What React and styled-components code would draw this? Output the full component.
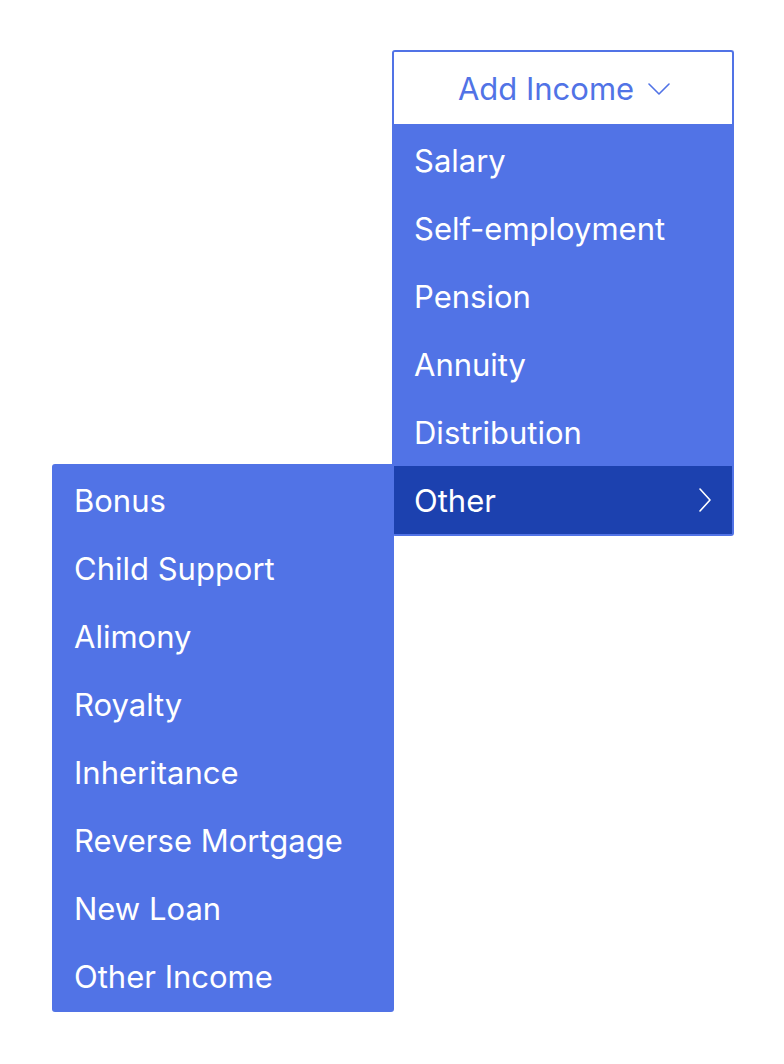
import React from "react";
import styled, { createGlobalStyle } from "styled-components";

const GlobalStyle = createGlobalStyle`
  body {
    margin: 0;
    background: #ffffff;
    font-family: Inter, "Noto Sans", sans-serif;
  }
`;

const mainItems = ["Salary", "Self-employment", "Pension", "Annuity", "Distribution"];
const otherItems = [
  "Bonus",
  "Child Support",
  "Alimony",
  "Royalty",
  "Inheritance",
  "Reverse Mortgage",
  "New Loan",
  "Other Income",
];

const ChevronDown = () => (
  <svg width="22" height="12" viewBox="0 0 22 12" fill="none">
    <path d="M1 1l10 10L21 1" stroke="currentColor" strokeWidth="1.6" strokeLinecap="round" strokeLinejoin="round" />
  </svg>
);

const ChevronRight = () => (
  <svg width="12" height="24" viewBox="0 0 12 24" fill="none">
    <path d="M1 1l10 11L1 23" stroke="currentColor" strokeWidth="1.6" strokeLinecap="round" strokeLinejoin="round" />
  </svg>
);

const App = () => {
  return (
    <>
      <GlobalStyle />
      <Page>
        <Dropdown>
          <Toggle>
            Add Income
            <ChevronDown />
          </Toggle>
          <Menu>
            {mainItems.map((item) => (
              <Item key={item}>{item}</Item>
            ))}
            <Item $active>
              Other
              <ChevronRight />
              <SubMenu>
                {otherItems.map((item) => (
                  <Item key={item}>{item}</Item>
                ))}
              </SubMenu>
            </Item>
          </Menu>
        </Dropdown>
      </Page>
    </>
  );
};

export default App;

const Page = styled.div`
  padding: 50px 0 0 392px;
  min-height: 1064px;
  box-sizing: border-box;
`;

const Dropdown = styled.div`
  width: 342px;
  display: flex;
  flex-direction: column;
`;

const Toggle = styled.button`
  height: 74px;
  box-sizing: border-box;
  border: 2px solid #5173e6;
  border-bottom: none;
  border-radius: 3px 3px 0 0;
  background: #ffffff;
  color: #5173e6;
  font-family: Inter, "Noto Sans", sans-serif;
  font-size: 31px;
  display: flex;
  align-items: center;
  justify-content: center;
  gap: 14px;
  padding: 0 0 0 2px;
  svg {
    margin-top: 2px;
  }
`;

const Menu = styled.div`
  background: #5173e6;
  padding: 2px;
  border-radius: 0 0 3px 3px;
  display: flex;
  flex-direction: column;
`;

const Item = styled.div`
  position: relative;
  height: 68px;
  display: flex;
  align-items: center;
  justify-content: space-between;
  padding: 0 21px 0 20px;
  background: ${(p) => (p.$active ? "#1c41af" : "transparent")};
  color: #ffffff;
  font-size: 31px;
  svg {
    color: #ffffff;
  }
`;

const SubMenu = styled.div`
  position: absolute;
  top: -2px;
  right: 100%;
  width: 342px;
  box-sizing: border-box;
  padding: 2px 0;
  background: #5173e6;
  border-radius: 3px 0 3px 3px;
  display: flex;
  flex-direction: column;
  ${Item} {
    padding: 0 22px;
  }
`;
